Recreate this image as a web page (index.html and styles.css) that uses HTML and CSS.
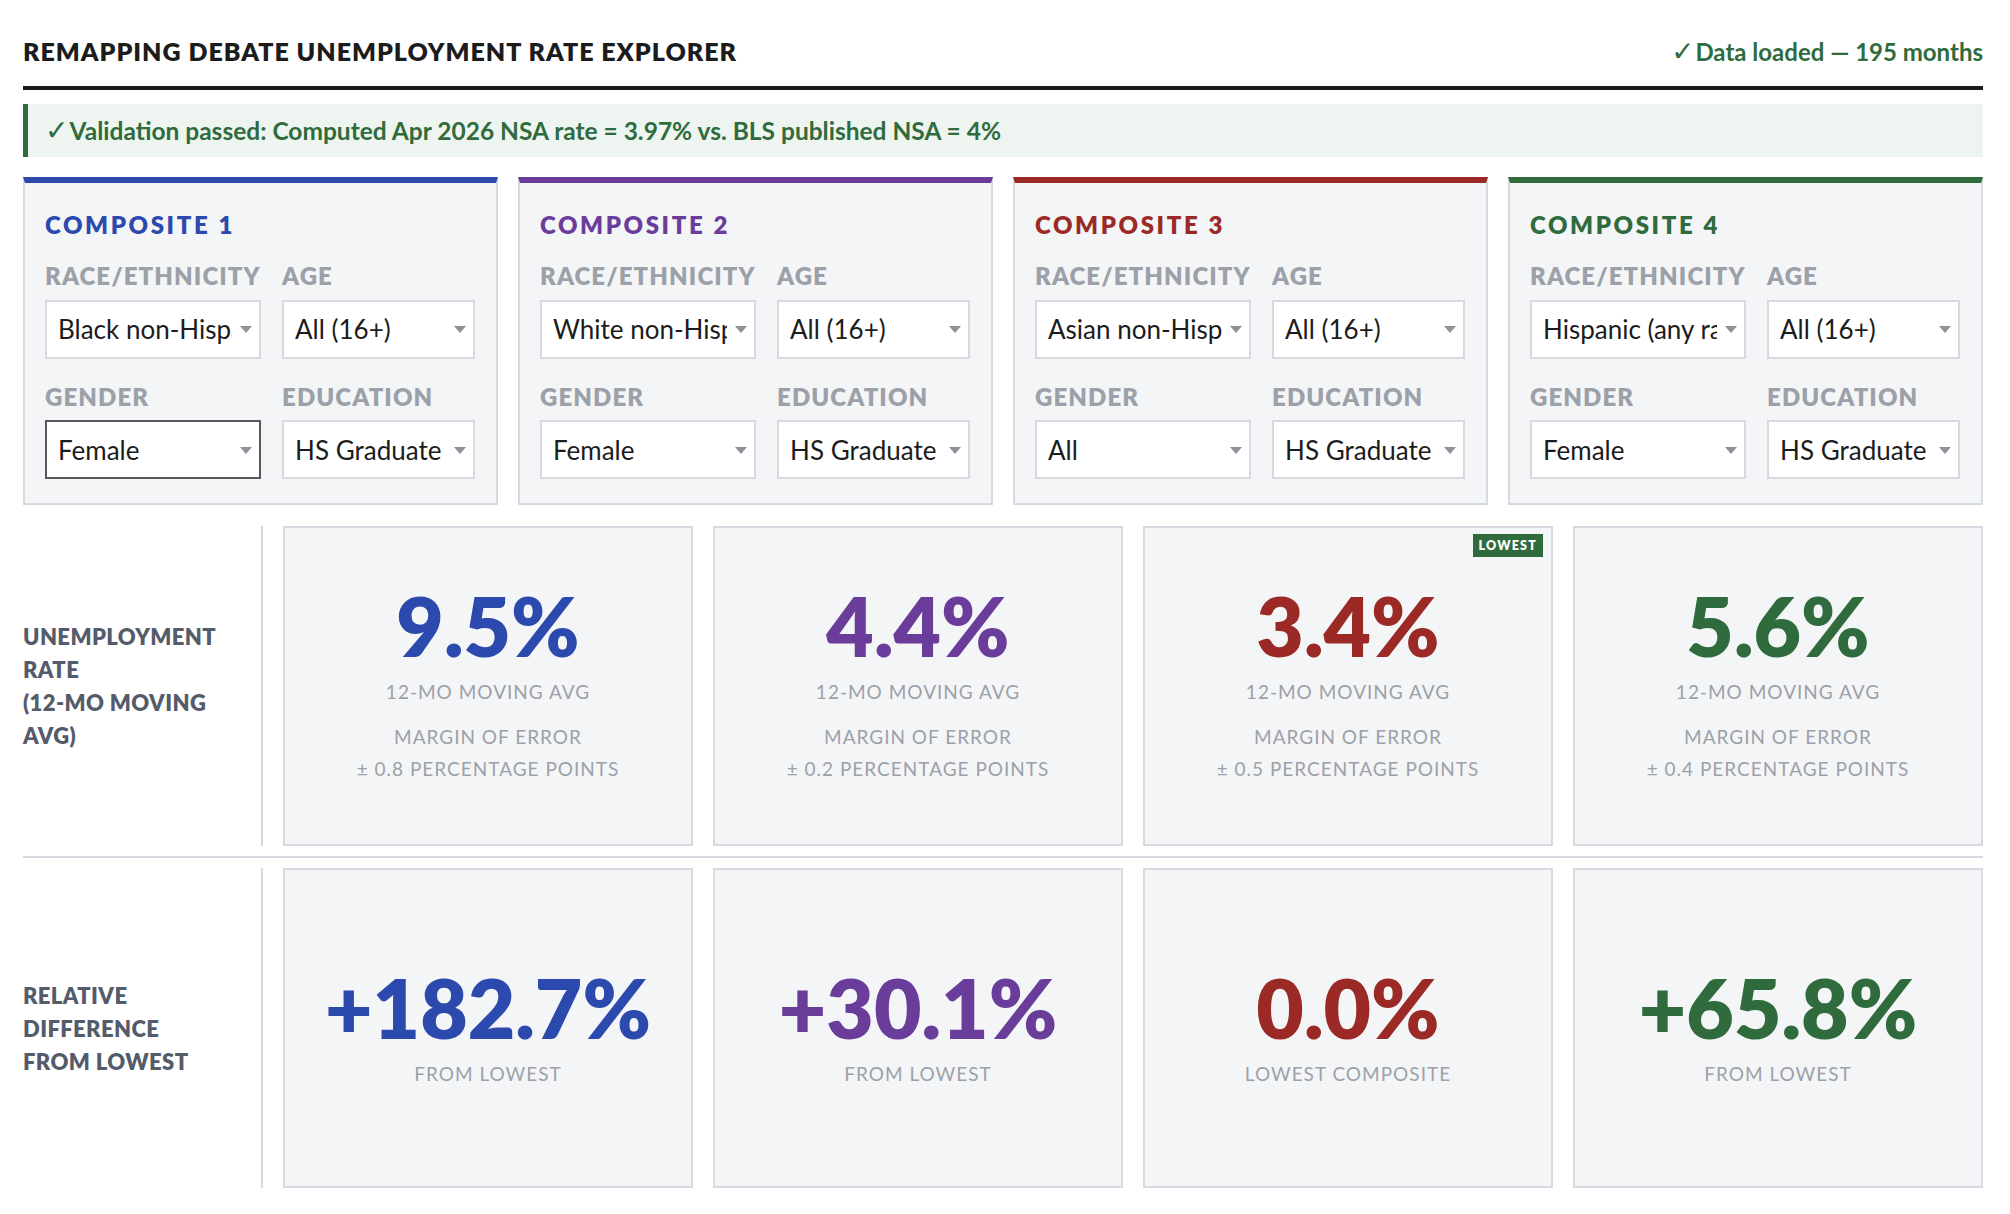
FILE: index.html
```html
<!DOCTYPE html>
<html lang="en">
<head>
<meta charset="utf-8">
<title>Remapping Debate Unemployment Rate Explorer</title>
<link rel="stylesheet" href="styles.css">
</head>
<body>
<div class="page">
  <header class="topbar">
    <h1 class="title">Remapping Debate Unemployment Rate Explorer</h1>
    <div class="status"><span class="tick">✓</span>Data loaded — 195 months</div>
  </header>

  <div class="banner"><span class="tick">✓</span>Validation passed: Computed Apr 2026 NSA rate = 3.97% vs. BLS published NSA = 4%</div>

  <section class="composites">
    <div class="composite c1">
      <h2 class="composite-title">Composite 1</h2>
      <div class="fields">
        <label class="field"><span class="field-label">Race/Ethnicity</span>
          <span class="select-wrap"><select><option>All</option><option selected>Black non-Hispanic</option><option>White non-Hispanic</option><option>Asian non-Hispanic</option><option>Hispanic (any race)</option></select></span></label>
        <label class="field"><span class="field-label">Age</span>
          <span class="select-wrap"><select><option selected>All (16+)</option><option>16–24</option><option>25–54</option><option>55+</option></select></span></label>
        <label class="field"><span class="field-label">Gender</span>
          <span class="select-wrap"><select class="is-active"><option>All</option><option selected>Female</option><option>Male</option></select></span></label>
        <label class="field"><span class="field-label">Education</span>
          <span class="select-wrap"><select><option>All</option><option>Less than HS</option><option selected>HS Graduate</option><option>Some College</option><option>Bachelor's+</option></select></span></label>
      </div>
    </div>

    <div class="composite c2">
      <h2 class="composite-title">Composite 2</h2>
      <div class="fields">
        <label class="field"><span class="field-label">Race/Ethnicity</span>
          <span class="select-wrap"><select><option>All</option><option>Black non-Hispanic</option><option selected>White non-Hispanic</option><option>Asian non-Hispanic</option><option>Hispanic (any race)</option></select></span></label>
        <label class="field"><span class="field-label">Age</span>
          <span class="select-wrap"><select><option selected>All (16+)</option><option>16–24</option><option>25–54</option><option>55+</option></select></span></label>
        <label class="field"><span class="field-label">Gender</span>
          <span class="select-wrap"><select><option>All</option><option selected>Female</option><option>Male</option></select></span></label>
        <label class="field"><span class="field-label">Education</span>
          <span class="select-wrap"><select><option>All</option><option>Less than HS</option><option selected>HS Graduate</option><option>Some College</option><option>Bachelor's+</option></select></span></label>
      </div>
    </div>

    <div class="composite c3">
      <h2 class="composite-title">Composite 3</h2>
      <div class="fields">
        <label class="field"><span class="field-label">Race/Ethnicity</span>
          <span class="select-wrap"><select><option>All</option><option>Black non-Hispanic</option><option>White non-Hispanic</option><option selected>Asian non-Hispanic</option><option>Hispanic (any race)</option></select></span></label>
        <label class="field"><span class="field-label">Age</span>
          <span class="select-wrap"><select><option selected>All (16+)</option><option>16–24</option><option>25–54</option><option>55+</option></select></span></label>
        <label class="field"><span class="field-label">Gender</span>
          <span class="select-wrap"><select><option selected>All</option><option>Female</option><option>Male</option></select></span></label>
        <label class="field"><span class="field-label">Education</span>
          <span class="select-wrap"><select><option>All</option><option>Less than HS</option><option selected>HS Graduate</option><option>Some College</option><option>Bachelor's+</option></select></span></label>
      </div>
    </div>

    <div class="composite c4">
      <h2 class="composite-title">Composite 4</h2>
      <div class="fields">
        <label class="field"><span class="field-label">Race/Ethnicity</span>
          <span class="select-wrap"><select><option>All</option><option>Black non-Hispanic</option><option>White non-Hispanic</option><option>Asian non-Hispanic</option><option selected>Hispanic (any race)</option></select></span></label>
        <label class="field"><span class="field-label">Age</span>
          <span class="select-wrap"><select><option selected>All (16+)</option><option>16–24</option><option>25–54</option><option>55+</option></select></span></label>
        <label class="field"><span class="field-label">Gender</span>
          <span class="select-wrap"><select><option>All</option><option selected>Female</option><option>Male</option></select></span></label>
        <label class="field"><span class="field-label">Education</span>
          <span class="select-wrap"><select><option>All</option><option>Less than HS</option><option selected>HS Graduate</option><option>Some College</option><option>Bachelor's+</option></select></span></label>
      </div>
    </div>
  </section>

  <section class="metric-row rate">
    <div class="row-label"><span>Unemployment rate</span><span>(12-mo moving avg)</span></div>
    <div class="stat c1">
      <div class="stat-value">9.5%</div>
      <div class="stat-note">12-mo moving avg</div>
      <div class="stat-moe">Margin of error<br>± 0.8 percentage points</div>
    </div>
    <div class="stat c2">
      <div class="stat-value">4.4%</div>
      <div class="stat-note">12-mo moving avg</div>
      <div class="stat-moe">Margin of error<br>± 0.2 percentage points</div>
    </div>
    <div class="stat c3">
      <span class="badge">Lowest</span>
      <div class="stat-value">3.4%</div>
      <div class="stat-note">12-mo moving avg</div>
      <div class="stat-moe">Margin of error<br>± 0.5 percentage points</div>
    </div>
    <div class="stat c4">
      <div class="stat-value">5.6%</div>
      <div class="stat-note">12-mo moving avg</div>
      <div class="stat-moe">Margin of error<br>± 0.4 percentage points</div>
    </div>
  </section>

  <section class="metric-row diff">
    <div class="row-label"><span>Relative difference from lowest</span></div>
    <div class="stat c1">
      <div class="stat-value">+182.7%</div>
      <div class="stat-note">From lowest</div>
    </div>
    <div class="stat c2">
      <div class="stat-value">+30.1%</div>
      <div class="stat-note">From lowest</div>
    </div>
    <div class="stat c3">
      <div class="stat-value">0.0%</div>
      <div class="stat-note">Lowest composite</div>
    </div>
    <div class="stat c4">
      <div class="stat-value">+65.8%</div>
      <div class="stat-note">From lowest</div>
    </div>
  </section>
</div>
</body>
</html>
```
FILE: styles.css
```css
* {
  box-sizing: border-box;
}

html,
body {
  margin: 0;
  padding: 0;
  background: #ffffff;
}

body {
  font-family: Lato, "Liberation Sans", sans-serif;
  color: #1c1c1c;
}

.page {
  width: 1960px;
  margin-left: 23px;
  padding-bottom: 28px;
}

/* accent colours per composite */
.c1 { --accent: #2c4aad; }
.c2 { --accent: #6a3d9b; }
.c3 { --accent: #9b2a26; }
.c4 { --accent: #2f6b3c; }

/* header */
.topbar {
  display: flex;
  justify-content: space-between;
  align-items: baseline;
  padding-top: 36px;
  padding-bottom: 19px;
  border-bottom: 4px solid #1c1c1c;
}

.title {
  margin: 0;
  font-size: 25px;
  line-height: 30px;
  font-weight: 800;
  letter-spacing: 1px;
  text-transform: uppercase;
  color: #1c1c1c;
}

.status {
  font-size: 24px;
  line-height: 30px;
  font-weight: 700;
  color: #2f6b3c;
}

.tick {
  font-family: "DejaVu Sans", sans-serif;
  font-weight: 700;
  font-size: 1.15em;
  line-height: 1;
  margin-right: 1px;
}

/* validation banner */
.banner {
  margin-top: 14px;
  height: 53px;
  line-height: 53px;
  padding-left: 17px;
  border-left: 5px solid #2f6b3c;
  background: #eef5f0;
  color: #2f6b3c;
  font-size: 24.5px;
  font-weight: 700;
}

/* composite selector cards */
.composites {
  margin-top: 20px;
  display: grid;
  grid-template-columns: repeat(4, 1fr);
  column-gap: 20px;
}

.composite {
  background: #f4f5f7;
  border: 2px solid #d6d9df;
  border-top: 6px solid var(--accent);
  padding: 28px 21px 24px 20px;
}

.composite-title {
  margin: 0 0 22px;
  font-size: 24px;
  line-height: 28.8px;
  font-weight: 800;
  letter-spacing: 2.6px;
  text-transform: uppercase;
  color: var(--accent);
}

.fields {
  display: grid;
  grid-template-columns: 1.12fr 1fr;
  column-gap: 21px;
  row-gap: 24px;
}

.field {
  display: flex;
  flex-direction: column;
  gap: 9px;
  min-width: 0;
}

.field-label {
  font-size: 24px;
  line-height: 28.8px;
  font-weight: 800;
  letter-spacing: 1.1px;
  text-transform: uppercase;
  color: #9ca1a9;
  white-space: nowrap;
}

.select-wrap {
  position: relative;
  display: block;
}

.select-wrap::after {
  content: "";
  position: absolute;
  right: 9px;
  top: 50%;
  margin-top: -3px;
  border-left: 6px solid transparent;
  border-right: 6px solid transparent;
  border-top: 7px solid #8d929b;
  pointer-events: none;
}

.select-wrap select {
  -webkit-appearance: none;
  appearance: none;
  display: block;
  width: 100%;
  height: 59px;
  margin: 0;
  padding: 0 27px 0 11px;
  border: 2px solid #d6d9df;
  border-radius: 0;
  background: #ffffff;
  font-family: Lato, "Liberation Sans", sans-serif;
  font-size: 26px;
  font-weight: 400;
  color: #1c1c1c;
  outline: none;
}

.select-wrap select.is-active {
  border-color: #55585e;
}

/* metric rows */
.metric-row {
  display: grid;
  grid-template-columns: 240px repeat(4, 1fr);
  column-gap: 20px;
}

.metric-row.rate {
  margin-top: 21px;
  padding-bottom: 10px;
  border-bottom: 2px solid #d6d9df;
}

.metric-row.diff {
  padding-top: 10px;
}

.row-label {
  display: flex;
  flex-direction: column;
  justify-content: center;
  padding-right: 36px;
  border-right: 2px solid #d6d9df;
  font-size: 22px;
  line-height: 33px;
  font-weight: 800;
  letter-spacing: 0.4px;
  text-transform: uppercase;
  color: #545b6a;
}

.stat {
  position: relative;
  min-height: 320px;
  padding-bottom: 8px;
  background: #f4f5f7;
  border: 2px solid #d6d9df;
  display: flex;
  flex-direction: column;
  align-items: center;
  justify-content: center;
  text-align: center;
}

.stat-value {
  font-size: 82px;
  line-height: 92px;
  font-weight: 800;
  color: var(--accent);
}

.stat-note {
  margin-top: 7px;
  font-size: 19px;
  line-height: 28px;
  letter-spacing: 1px;
  text-transform: uppercase;
  color: #9ca1a9;
}

.stat-moe {
  margin-top: 15px;
  font-size: 19px;
  line-height: 32px;
  letter-spacing: 1px;
  text-transform: uppercase;
  color: #9ca1a9;
}

.badge {
  position: absolute;
  top: 6px;
  right: 8px;
  padding: 0 6px;
  background: #2f6b3c;
  color: #ffffff;
  font-size: 12.5px;
  line-height: 23px;
  font-weight: 800;
  letter-spacing: 1.2px;
  text-transform: uppercase;
}
```
